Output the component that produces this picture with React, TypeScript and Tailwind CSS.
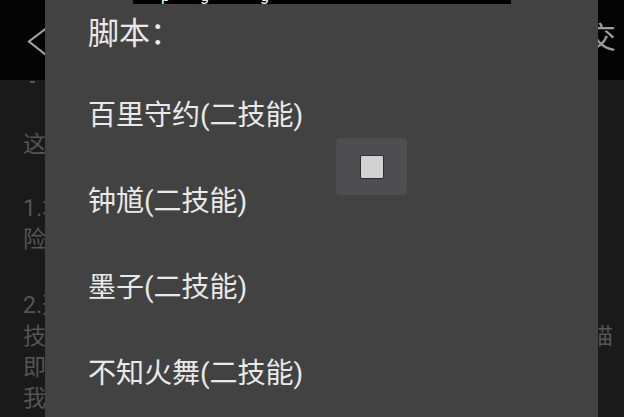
const FONT = "font-['Roboto','Noto_Sans_CJK_SC',sans-serif]";

const HEROES = ["百里守约(二技能)", "钟馗(二技能)", "墨子(二技能)", "不知火舞(二技能)"];

function BackChevron() {
  return (
    <svg width="24" height="30" viewBox="0 0 24 30" fill="none" className="shrink-0">
      <path d="M19 1.5 L2 14.5 L19 28" stroke="#a3a3a3" strokeWidth="2.2" strokeLinejoin="miter" />
    </svg>
  );
}

function Row({ left, right }: { left: string; right?: string }) {
  return (
    <div className="flex justify-between whitespace-nowrap overflow-hidden h-[31px] leading-[31px]">
      <span>{left}</span>
      {right && <span className="pr-[11px]">{right}</span>}
    </div>
  );
}

export default function App() {
  return (
    <div className={`relative w-[624px] h-[417px] overflow-hidden bg-[#1a1a1a] ${FONT}`}>
      {/* header */}
      <div className="h-[80px] bg-[#040404] flex items-center justify-between pl-[27px] pr-[8px]">
        <div className="pt-[3px]">
          <BackChevron />
        </div>
        <span className="text-[30px] leading-[30px] text-[#9c9c9c] pb-[4px]">提交</span>
      </div>

      {/* page text behind the dialog */}
      <div className="pl-[23px] text-[23px] text-[#555555] flex flex-col">
        <div className="ml-[7px] mt-[1px] w-[5px] h-[2px] bg-[#555555]" />
        <div className="mt-[46px]">
          <Row left="这是一个王者荣耀辅助脚本，使用说明如下：" />
        </div>
        <div className="mt-[33px]">
          <Row left="1.本脚本仅供学习交流使用，使用存在封号风" />
          <Row left="险，请谨慎使用。" />
        </div>
        <div className="mt-[35px]">
          <Row left="2.选择英雄后进入游戏，点击悬浮按钮开启二" />
          <Row left="技能自动释放，检测到敌人进入范围时自动" right="瞄" />
          <Row left="即可，无需手动操作，如有问题请联系" />
          <Row left="我们。" />
        </div>
      </div>

      {/* dialog */}
      <div className="absolute left-[45px] top-0 w-[553px] h-[417px] bg-[#424242] pl-[43px] pt-[19px] text-[#e9e9e9]">
        <div className="text-[31px] leading-[30px]">脚本：</div>
        <div className="mt-[24px] flex flex-col">
          {HEROES.map((h) => (
            <div key={h} className="h-[86px] flex items-center text-[28px] leading-[28px]">
              {h}
            </div>
          ))}
        </div>

        {/* floating checkbox control */}
        <div className="absolute left-[291px] top-[138px] w-[71px] h-[57px] rounded-[4px] bg-[#4e4e50] flex items-center justify-center">
          <div className="w-[24px] h-[24px] rounded-[2px] bg-[#d2d2d2] border-[1.5px] border-[#2c2c2c]" />
        </div>
      </div>

      {/* clipped toast at top */}
      <div className="absolute left-[133px] top-0 w-[378px] h-[4px] bg-black overflow-hidden text-white text-[16px] leading-[16px] font-['Roboto',sans-serif]">
        <span className="absolute left-[28px] top-[-12px]">p</span>
        <span className="absolute left-[67px] top-[-12px]">g</span>
        <span className="absolute left-[127px] top-[-12px]">g</span>
      </div>
    </div>
  );
}
